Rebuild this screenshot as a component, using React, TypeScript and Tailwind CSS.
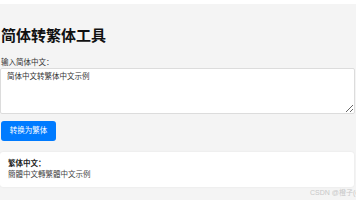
import React, { useState } from 'react'

const font = '"Liberation Sans", "Noto Sans CJK SC", sans-serif'

export default function App() {
  const [input, setInput] = useState('简体中文转繁体中文示例')

  return (
    <div className="relative h-[200px] w-[356px] overflow-hidden bg-white" style={{ fontFamily: font }}>
      <div className="mt-[4px] h-[196px] bg-[#f4f4f4] pt-[22px]">
        <h1 className="pl-[1px] text-[15px] font-bold leading-[20px] text-[#111]">简体转繁体工具</h1>
        <label className="mt-[12px] block pl-[1px] text-[7.5px] leading-[9px] text-[#333]">输入简体中文：</label>
        <textarea
          value={input}
          onChange={(e) => setInput(e.target.value)}
          className="mt-[1px] block h-[46px] w-[355px] rounded-[2px] border border-[#dcdcdc] bg-white px-[6px] py-[3px] text-[7.5px] leading-[10px] text-[#333] outline-none"
        />
        <button className="ml-[1px] mt-[7px] h-[20px] w-[55px] rounded-[3px] bg-[#007bff] text-[7.5px] text-white">
          转换为繁体
        </button>
        <div className="mt-[11px] h-[35px] w-[354px] rounded-[3px] bg-white px-[8px] pt-[6px] shadow-[0_0_2px_rgba(0,0,0,0.08)]">
          <div className="text-[7.5px] font-bold leading-[11px] text-[#222]">繁体中文：</div>
          <div className="text-[7.5px] leading-[11px] text-[#444]">簡體中文轉繁體中文示例</div>
        </div>
      </div>
      <div className="absolute bottom-[3px] left-[310px] whitespace-nowrap text-[7px] leading-[8px] text-[#c8c8c8]">
        CSDN @橙子(c
      </div>
    </div>
  )
}
